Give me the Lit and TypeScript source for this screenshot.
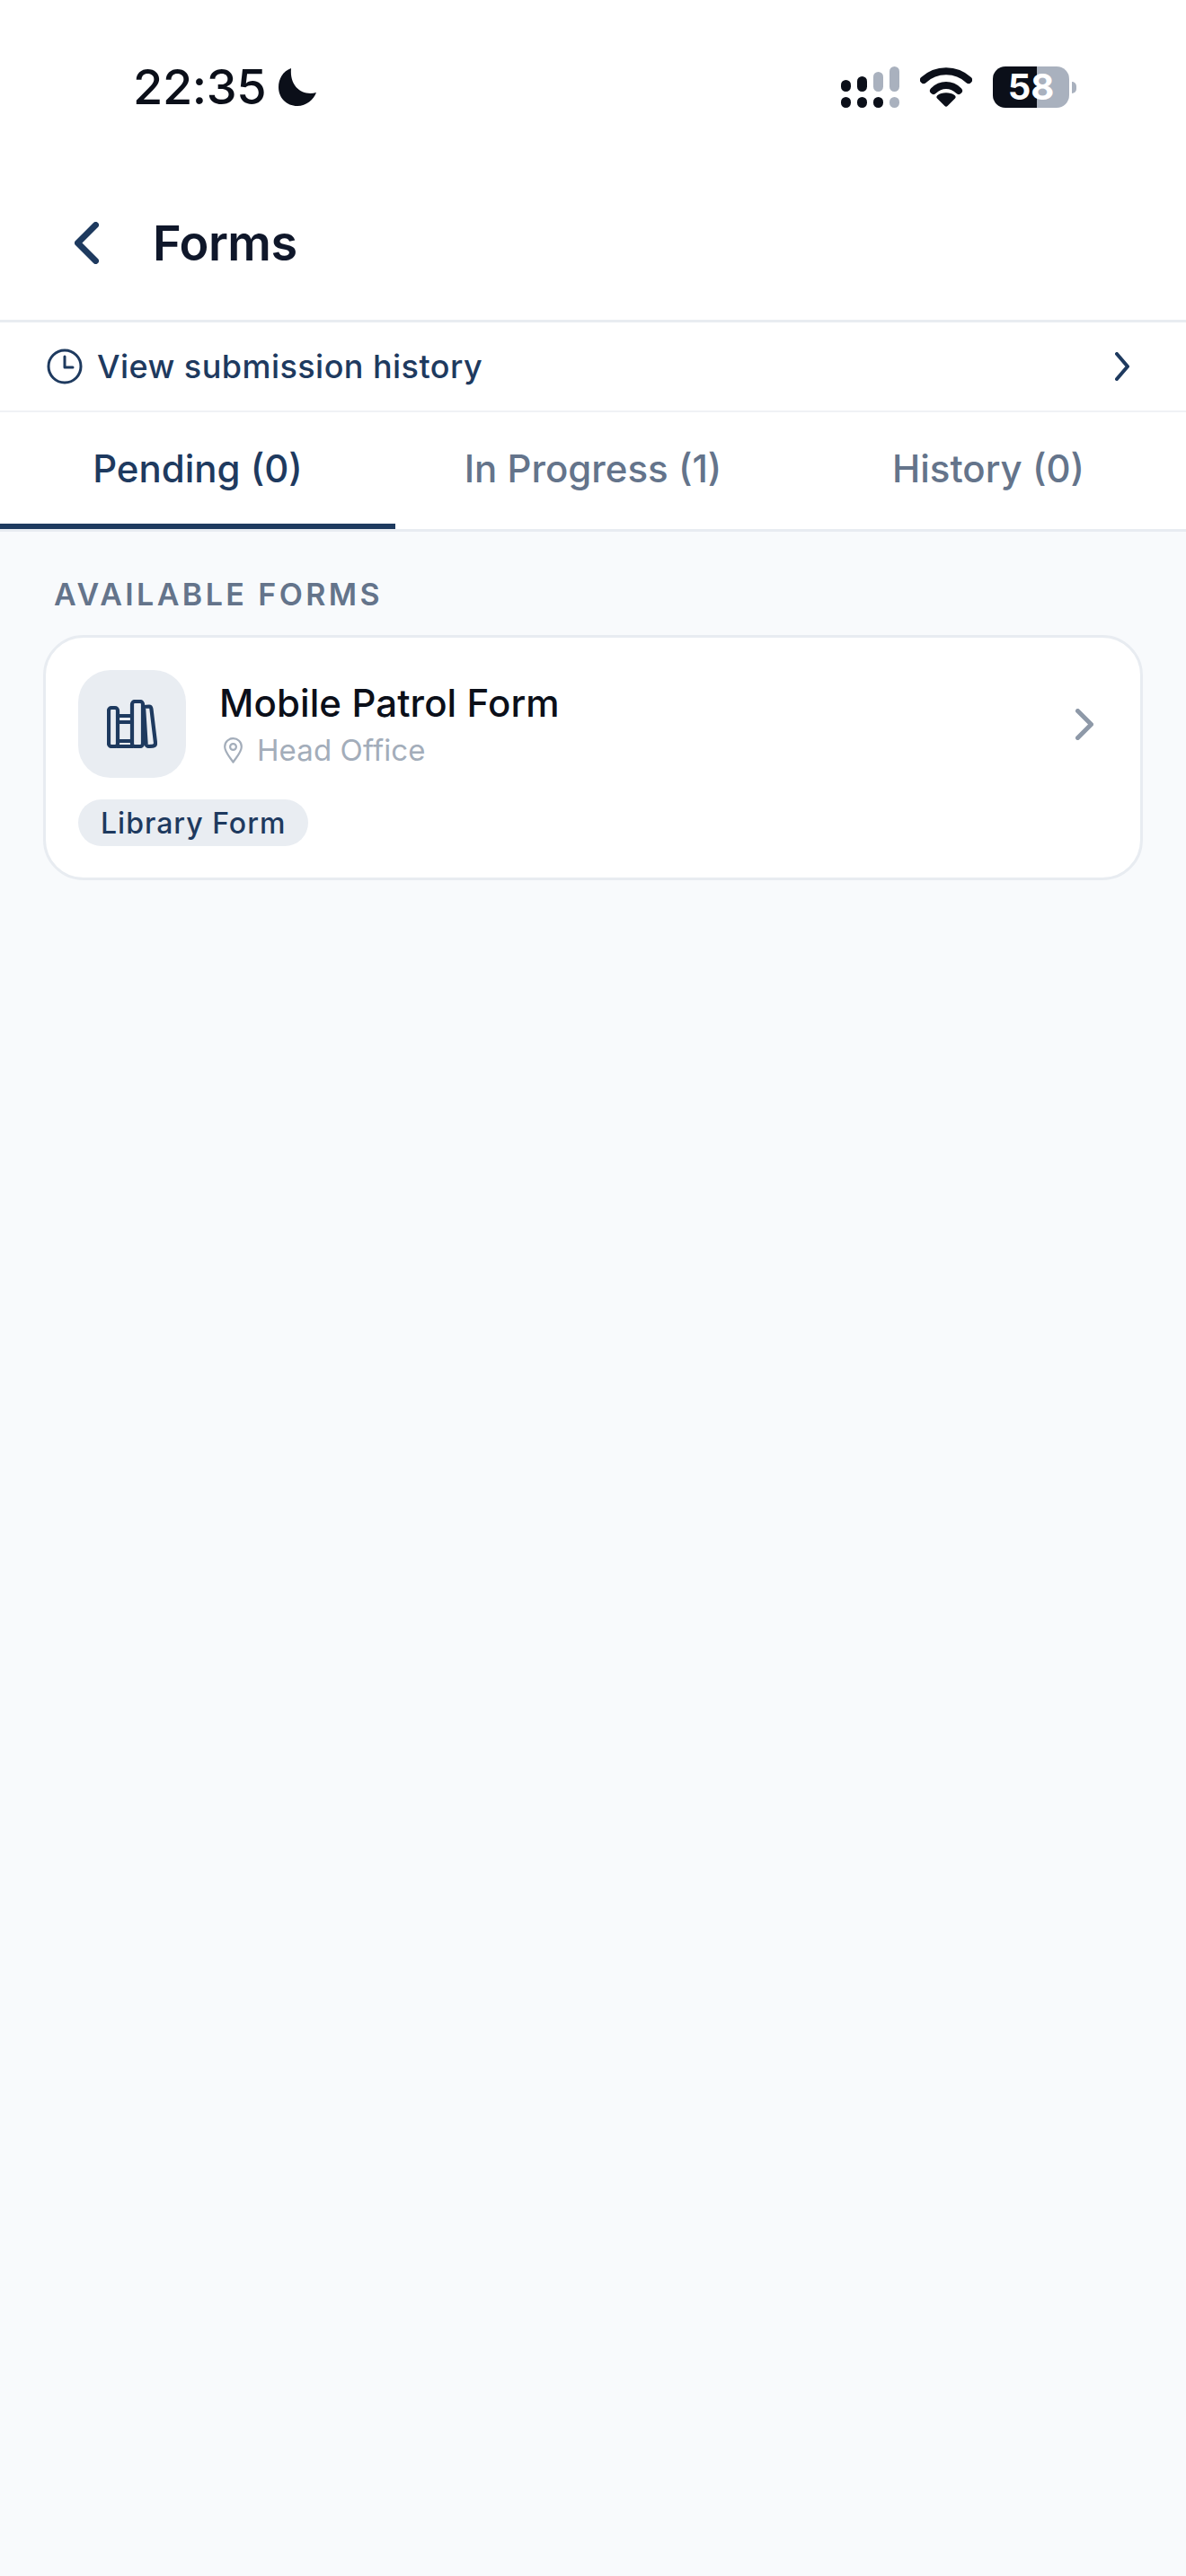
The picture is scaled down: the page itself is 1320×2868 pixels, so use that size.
import { html, css, LitElement } from "lit";
import { customElement } from "lit/decorators.js";

const chevron = (w: number, h: number, sw: number) => html`
  <svg width=${w} height=${h} viewBox="0 0 ${w} ${h}" fill="none" stroke="currentColor" stroke-width=${sw} stroke-linecap="round" stroke-linejoin="round">
    <path d="M${sw / 2} ${sw / 2} L${w - sw / 2} ${h / 2} L${sw / 2} ${h - sw / 2}" />
  </svg>
`;

@customElement("app-root")
export class AppRoot extends LitElement {
  static styles = css`
    :host {
      display: flex;
      flex-direction: column;
      min-height: 2868px;
      background: #f8fafc;
      font-family: Inter, "Liberation Sans", sans-serif;
      color: #0b0f19;
    }
    .status {
      height: 194px;
      box-sizing: border-box;
      background: #fff;
      padding: 0 122px 0 148px;
      display: flex;
      align-items: center;
    }
    .time {
      font-size: 54px;
      font-weight: 500;
      letter-spacing: -0.4px;
      line-height: 60px;
    }
    .moon {
      margin-left: 14px;
      display: block;
    }
    .status-icons {
      margin-left: auto;
      display: flex;
      align-items: center;
    }
    .signal {
      display: block;
      margin-right: 23px;
    }
    .wifi {
      display: block;
      margin-right: 23px;
    }
    .battery {
      display: flex;
      align-items: center;
      gap: 3px;
    }
    .battery-body {
      width: 85px;
      height: 46px;
      border-radius: 14px;
      background: linear-gradient(90deg, #0b0f19 0 49px, #a9b1be 49px);
      color: #fff;
      font-size: 40px;
      font-weight: 700;
      line-height: 46px;
      text-align: center;
    }
    .battery-nub {
      width: 5px;
      height: 13px;
      border-radius: 0 5px 5px 0;
      background: #a9b1be;
    }
    .header {
      height: 165px;
      box-sizing: border-box;
      padding: 0 0 9px 83px;
      background: #fff;
      border-bottom: 3px solid #e8ecf1;
      display: flex;
      align-items: center;
      color: #1e3a5f;
    }
    .back {
      display: block;
    }
    .title {
      margin-left: 60px;
      font-size: 54px;
      font-weight: 600;
      letter-spacing: -0.5px;
      color: #0f172a;
    }
    .history-link {
      height: 100px;
      box-sizing: border-box;
      padding: 0 63px 0 52px;
      background: #fff;
      border-bottom: 2px solid #f0f2f5;
      display: flex;
      align-items: center;
      color: #1e3a5f;
    }
    .history-link svg {
      display: block;
    }
    .history-text {
      margin-left: 16px;
      font-size: 36px;
      font-weight: 550;
      letter-spacing: 0.45px;
      flex: 1;
    }
    .tabs {
      display: grid;
      grid-template-columns: repeat(3, 1fr);
      height: 133px;
      background: #fff;
      border-bottom: 3px solid #e8ecf1;
      box-sizing: border-box;
    }
    .tab {
      height: 130px;
      box-sizing: border-box;
      display: flex;
      align-items: center;
      justify-content: center;
      border-bottom: 6px solid transparent;
      font-size: 42px;
      font-weight: 450;
      color: #64748b;
    }
    .tab.active {
      color: #1e3a5f;
      font-weight: 550;
      border-bottom-color: #1e3a5f;
    }
    .content {
      flex: 1;
      padding: 55px 48px 0;
    }
    .section-label {
      padding-left: 12px;
      margin-bottom: 30px;
      font-size: 34px;
      line-height: 30px;
      font-weight: 600;
      letter-spacing: 3.4px;
      color: #64748b;
    }
    .card {
      box-sizing: border-box;
      height: 273px;
      padding: 36px;
      background: #fff;
      border: 3px solid #e8ecf1;
      border-radius: 45px;
    }
    .card-row {
      display: flex;
      align-items: center;
    }
    .tile {
      width: 120px;
      height: 120px;
      border-radius: 36px;
      background: #e9edf2;
      display: flex;
      align-items: center;
      justify-content: center;
      color: #1e3a5f;
    }
    .card-text {
      margin-left: 37px;
      padding-top: 2px;
      flex: 1;
    }
    .card-title {
      font-size: 42px;
      font-weight: 550;
      line-height: 50px;
      letter-spacing: 0.1px;
      color: #0b0f19;
    }
    .card-sub {
      display: flex;
      align-items: center;
      margin-top: 6px;
      font-size: 33px;
      line-height: 42px;
      letter-spacing: 0.1px;
      color: #a3adba;
    }
    .card-sub svg {
      display: block;
      margin: 0 16px 0 5px;
    }
    .card-chevron {
      margin-right: 16px;
      color: #8e99a8;
      display: block;
    }
    .chip {
      display: inline-block;
      margin-top: 24px;
      height: 52px;
      line-height: 54px;
      padding: 0 25px;
      border-radius: 26px;
      background: #e9edf2;
      color: #1e3a5f;
      font-size: 32px;
      font-weight: 550;
      letter-spacing: 1px;
    }
  `;

  render() {
    return html`
      <div class="status">
        <span class="time">22:35</span>
        <svg class="moon" width="42" height="42" viewBox="0 0 42 42" fill="currentColor">
          <path d="M14 0 C5 3 0 12 0 21 C0 33 9 42 21 42 C31 42 39 35 42 27 C28 31 12 22 14 0 Z" />
        </svg>
        <div class="status-icons">
          <svg class="signal" width="65" height="46" viewBox="0 0 65 46">
            <g fill="#0b0f19">
              <rect x="0" y="15" width="11" height="13" rx="5.5" />
              <rect x="18" y="11" width="11" height="17" rx="5.5" />
              <rect x="0" y="34" width="11" height="12" rx="5.5" />
              <rect x="18" y="34" width="11" height="12" rx="5.5" />
              <rect x="36" y="34" width="11" height="12" rx="5.5" />
            </g>
            <g fill="#a9b1be">
              <rect x="36" y="6" width="11" height="22" rx="5.5" />
              <rect x="54" y="0" width="11" height="28" rx="5.5" />
              <rect x="54" y="34" width="11" height="12" rx="5.5" />
            </g>
          </svg>
          <svg class="wifi" width="58" height="44" viewBox="0 0 58 44" fill="none" stroke="#0b0f19" stroke-linecap="round">
            <path d="M4 14 C18 1 40 1 54 14" stroke-width="8" />
            <path d="M15 26 C23 18 35 18 43 26" stroke-width="8" />
            <path d="M29 41 L21 33 C25 30 33 30 37 33 Z" fill="#0b0f19" stroke-width="5" stroke-linejoin="round" />
          </svg>
          <div class="battery">
            <div class="battery-body">58</div>
            <div class="battery-nub"></div>
          </div>
        </div>
      </div>

      <div class="header">
        <svg class="back" width="27" height="47" viewBox="0 0 27 47" fill="none" stroke="currentColor" stroke-width="7" stroke-linecap="round" stroke-linejoin="round">
          <path d="M23.5 3.5 L3.5 23.5 L23.5 43.5" />
        </svg>
        <span class="title">Forms</span>
      </div>

      <div class="history-link">
        <svg width="40" height="40" viewBox="0 0 40 40" fill="none" stroke="currentColor" stroke-width="3" stroke-linecap="round" stroke-linejoin="round">
          <circle cx="20" cy="20" r="18" />
          <path d="M20 9 V21 H29" />
        </svg>
        <span class="history-text">View submission history</span>
        ${chevron(16, 32, 4)}
      </div>

      <div class="tabs">
        <div class="tab active">Pending (0)</div>
        <div class="tab">In Progress (1)</div>
        <div class="tab">History (0)</div>
      </div>

      <div class="content">
        <div class="section-label">AVAILABLE FORMS</div>
        <div class="card">
          <div class="card-row">
            <div class="tile">
              <svg width="56" height="54" viewBox="0 0 56 54" fill="none" stroke="currentColor" stroke-width="4.2" stroke-linejoin="round" stroke-linecap="round">
                <rect x="2" y="9" width="10" height="43" rx="3" />
                <path d="M12 18 H28 M12 25 H28 M12 46 H28 M12 52 H28" />
                <rect x="28" y="2" width="12" height="50" rx="3" />
                <path d="M41 8 L47 7.5 Q49 7.5 49.4 10 L54 48 Q54.3 51 51 51.6 L47 52 Q44 52 43.6 49.5 Z" />
              </svg>
            </div>
            <div class="card-text">
              <div class="card-title">Mobile Patrol Form</div>
              <div class="card-sub">
                <svg width="21" height="29" viewBox="0 0 21 29" fill="none" stroke="currentColor" stroke-width="2.2" stroke-linejoin="round">
                  <path d="M10.5 27.5 C6 21 1.2 16 1.2 10.5 C1.2 5 5.4 1.2 10.5 1.2 C15.6 1.2 19.8 5 19.8 10.5 C19.8 16 15 21 10.5 27.5 Z" />
                  <circle cx="10.5" cy="10.5" r="3.4" />
                </svg>
                Head Office
              </div>
            </div>
            <svg class="card-chevron" width="20" height="35" viewBox="0 0 20 35" fill="none" stroke="currentColor" stroke-width="5" stroke-linecap="round" stroke-linejoin="round">
              <path d="M2.5 2.5 L17.5 17.5 L2.5 32.5" />
            </svg>
          </div>
          <span class="chip">Library Form</span>
        </div>
      </div>
    `;
  }
}
